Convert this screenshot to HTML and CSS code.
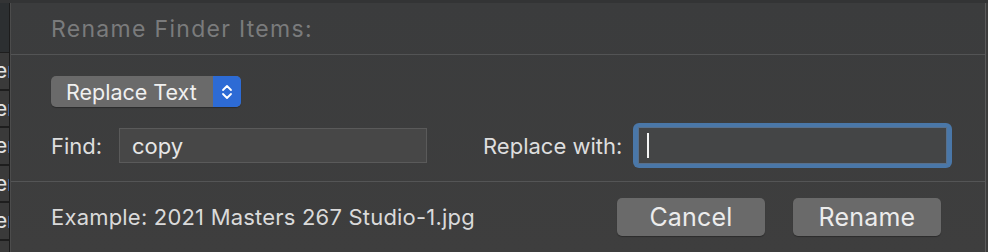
FILE: index.html
```html
<!DOCTYPE html>
<html lang="en">
<head>
    <meta charset="UTF-8">
    <title>Rename Finder Items</title>
    <link rel="stylesheet" href="styles.css">
</head>
<body>
    <div class="window">
        <div class="side-list">
            <div class="side-head"></div>
            <div class="side-row"><span>er</span></div>
            <div class="side-row"><span>er</span></div>
            <div class="side-row"><span>er</span></div>
            <div class="side-row"><span>er</span></div>
            <div class="side-row"><span>er</span></div>
        </div>

        <div class="sheet">
            <div class="sheet-head">
                <h1 class="title">Rename Finder Items:</h1>
            </div>

            <div class="sheet-body">
                <div class="popup">
                    <span class="popup-label">Replace Text</span>
                    <span class="popup-arrows">
                        <svg width="12" height="18" viewBox="0 0 12 18">
                            <path d="M2 7 L6 3 L10 7" fill="none" stroke="#fff" stroke-width="1.8" stroke-linecap="round" stroke-linejoin="round"/>
                            <path d="M2 11 L6 15 L10 11" fill="none" stroke="#fff" stroke-width="1.8" stroke-linecap="round" stroke-linejoin="round"/>
                        </svg>
                    </span>
                </div>

                <div class="field-row">
                    <label class="field-label find-label">Find:</label>
                    <div class="text-field find-field">copy</div>
                    <label class="field-label replace-label">Replace with:</label>
                    <div class="focus-ring">
                        <div class="text-field replace-field"><span class="caret"></span></div>
                    </div>
                </div>
            </div>

            <div class="sheet-foot">
                <p class="example">Example: 2021 Masters 267 Studio-1.jpg</p>
                <div class="buttons">
                    <button class="btn">Cancel</button>
                    <button class="btn">Rename</button>
                </div>
            </div>
        </div>

        <div class="edge"></div>
    </div>
</body>
</html>
```

FILE: styles.css
```css
body {
    margin: 0;
    width: 988px;
    height: 252px;
    overflow: hidden;
    background: #3c3d3e;
    font-family: 'Inter', 'Liberation Sans', sans-serif;
}
.window {
    display: flex;
    height: 249px;
    border-top: 3px solid #333435;
    box-shadow: inset 0 1px 0 #141414;
}
.side-list {
    width: 9px;
    flex-shrink: 0;
    display: flex;
    flex-direction: column;
    background: #3a3a3a;
    border-right: 1px solid #1c1c1c;
    overflow: hidden;
}
.side-head {
    height: 49px;
    background: #2c2f31;
    border-bottom: 1px solid #1e1e1e;
}
.side-row {
    height: 35.5px;
    border-bottom: 2px solid #1e1e1e;
    display: flex;
    align-items: center;
    overflow: hidden;
}
.side-row span {
    margin-left: -5px;
    font-size: 21px;
    color: #e2e2e2;
    white-space: nowrap;
}
.sheet {
    flex: 1;
    display: flex;
    flex-direction: column;
    border-left: 1px solid #4c4c4c;
    background: linear-gradient(180deg, #3b3c3d, #3e3e3e);
}
.edge {
    width: 2px;
    flex-shrink: 0;
    border-left: 1px solid #5a5a5a;
    background: #3c3c3c;
}
.sheet-head {
    height: 51px;
    display: flex;
    align-items: center;
    padding-left: 40px;
    border-bottom: 1px solid #535455;
}
.title {
    margin: 0;
    font-size: 23px;
    font-weight: 400;
    letter-spacing: 1.3px;
    color: #7a7b7c;
}
.sheet-body {
    height: 105px;
    padding-top: 21px;
    padding-left: 40px;
    border-bottom: 1px solid #545556;
}
.popup {
    display: flex;
    width: 190px;
    height: 31px;
    border-radius: 5px;
    overflow: hidden;
    background: #6a6a6a;
    box-shadow: 0 1px 1px rgba(0,0,0,0.3);
}
.popup-label {
    flex: 1;
    display: flex;
    align-items: center;
    padding-left: 15px;
    font-size: 21.5px;
    color: #f0f0f0;
}
.popup-arrows {
    width: 28px;
    display: flex;
    align-items: center;
    justify-content: center;
    background: #2d6bd5;
}
.field-row {
    display: flex;
    align-items: center;
    height: 45px;
    margin-top: 16px;
}
.field-label {
    font-size: 22px;
    color: #dedede;
}
.find-label {
    width: 68px;
}
.text-field {
    box-sizing: border-box;
    height: 35px;
    background: #474747;
    border: 1px solid #5a5a5a;
    display: flex;
    align-items: center;
    font-size: 22px;
    color: #e6e6e6;
}
.find-field {
    width: 308px;
    padding-left: 12px;
}
.replace-label {
    margin-left: 56px;
    width: 150px;
}
.focus-ring {
    width: 319px;
    height: 45px;
    box-sizing: border-box;
    padding: 4px 5px;
    border-radius: 6px;
    background: #4a77a8;
}
.replace-field {
    height: 37px;
    background: #444546;
    border-color: #58708c;
    padding-left: 8px;
}
.caret {
    width: 2px;
    height: 25px;
    background: #f5f5f5;
}
.sheet-foot {
    display: flex;
    align-items: center;
    justify-content: space-between;
    height: 38px;
    padding: 16px 44px 0 40px;
}
.example {
    margin: 0;
    font-size: 22px;
    letter-spacing: 0.2px;
    color: #dadada;
}
.buttons {
    display: flex;
    gap: 28px;
}
.btn {
    width: 148px;
    height: 38px;
    border: none;
    border-radius: 5px;
    background: #6a6a6a;
    color: #ececec;
    font-family: inherit;
    font-size: 25px;
    letter-spacing: 0.2px;
    box-shadow: 0 1px 1px rgba(0,0,0,0.3);
}
```
